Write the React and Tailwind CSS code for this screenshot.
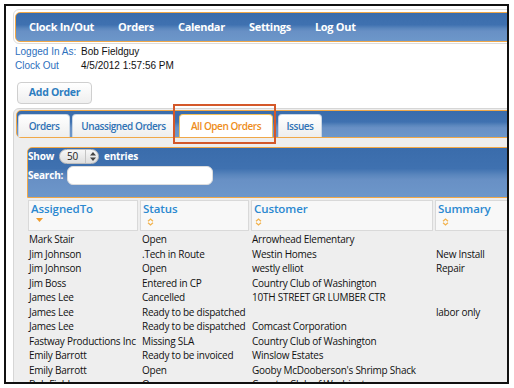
import React from "react";

const bar =
  "bg-[linear-gradient(to_bottom,#3a6cab_0%,#3f71b0_42%,#5a86bd_55%,#6890c5_65%,#6d97ca_100%)]";

const rows = [
  ["Mark Stair", "Open", "Arrowhead Elementary", ""],
  ["Jim Johnson", ".Tech in Route", "Westin Homes", "New Install"],
  ["Jim Johnson", "Open", "westly elliot", "Repair"],
  ["Jim Boss", "Entered in CP", "Country Club of Washington", ""],
  ["James Lee", "Cancelled", "10TH STREET GR LUMBER CTR", ""],
  ["James Lee", "Ready to be dispatched", "", "labor only"],
  ["James Lee", "Ready to be dispatched", "Comcast Corporation", ""],
  ["Fastway Productions Inc", "Missing SLA", "Country Club of Washington", ""],
  ["Emily Barrott", "Ready to be invoiced", "Winslow Estates", ""],
  ["Emily Barrott", "Open", "Gooby McDooberson's Shrimp Shack", ""],
  ["Bob Fieldguy", "Open", "Country Club of Washington", ""],
];

const navItems = ["Clock In/Out", "Orders", "Calendar", "Settings", "Log Out"];

// Sort indicators in the table header
const SortDown = () => (
  <svg width="7" height="4" viewBox="0 0 7 4" className="block">
    <path d="M0 0 H7 L3.5 4 Z" fill="#ef9b2c" />
  </svg>
);

const SortBoth = () => (
  <svg width="7" height="8" viewBox="0 0 7 8" className="block">
    <path d="M1 3.3 L3.5 1 L6 3.3 M1 4.7 L3.5 7 L6 4.7" fill="none" stroke="#f2b24c" strokeWidth="1.2" />
  </svg>
);

const HeaderCell = ({ label, active, pad }) => (
  <div className="h-[31px] border border-[#d9d9d9] bg-[#f8f8f8] pl-[2px] pt-[1px]">
    <div className="text-[11.5px] leading-[14px] font-semibold text-[#2b88d0] tracking-[-0.1px]">{label}</div>
    <div className={`mt-[2px] ${pad}`}>{active ? <SortDown /> : <SortBoth />}</div>
  </div>
);

const Tab = ({ label, w, active, mr }) => (
  <div
    className={`${w} ${mr} h-[23px] rounded-t-[4px] border border-b-0 flex items-center justify-center text-[10px] font-semibold tracking-[-0.45px] ${
      active
        ? "bg-white border-[#f3c35e] text-[#ee8d1a]"
        : "bg-[linear-gradient(to_bottom,#ffffff,#eeeeee)] border-[#c9d6e4] text-[#2f72b5]"
    }`}
  >
    {label}
  </div>
);

export default function App() {
  return (
    <div className="relative w-[514px] h-[388px] bg-white pt-[4px] pl-[4px] pr-[5px] pb-[4px] font-['Open_Sans',sans-serif]">
      <div className="h-full border-2 border-[#111] overflow-hidden bg-white">
        <div className="w-[620px] pl-[7px] pt-[3px]">
          {/* nav */}
          <div className="border border-[#dddddd] rounded-[6px] pl-[1px] pt-[2px] pb-[1px]">
            <div className={`h-[30px] border border-[#f0a848] rounded-l-[5px] ${bar} flex items-center gap-[24px] pl-[13px] text-white font-bold text-[11px] tracking-[-0.3px]`}>
              {navItems.map((n) => (
                <span key={n}>{n}</span>
              ))}
            </div>
          </div>

          {/* user info */}
          <div className="mt-[1px] pl-[2px] font-['Liberation_Sans',Arial,sans-serif] text-[10px] leading-[14px]">
            <div className="flex">
              <span className="w-[66px] text-[#2c6fbd]">Logged In As:</span>
              <span className="text-[#111]">Bob Fieldguy</span>
            </div>
            <div className="flex">
              <span className="w-[66px] text-[#2c6fbd]">Clock Out</span>
              <span className="text-[#111]">4/5/2012 1:57:56 PM</span>
            </div>
          </div>

          <button className="mt-[9px] ml-[4px] w-[75px] h-[22px] rounded-[4px] border border-[#cfcfcf] bg-[linear-gradient(to_bottom,#ffffff,#efefef)] text-[#2d7dc0] font-bold text-[10.5px] tracking-[-0.3px] flex items-center justify-center">
            Add Order
          </button>

          {/* tabs container */}
          <div className="mt-[4px] border border-[#d6d6d6] rounded-[6px] bg-[#eeeeee] pl-[2px] pt-[1px] h-[300px]">
            <div className={`h-[28px] border border-[#f0a848] rounded-[5px] ${bar} flex items-end pl-[1px]`}>
              <Tab label="Orders" w="w-[52px]" mr="mr-[2px]" />
              <Tab label="Unassigned Orders" w="w-[103px]" mr="mr-[4px]" />
              <Tab label="All Open Orders" w="w-[94px]" mr="mr-[5px]" active />
              <Tab label="Issues" w="w-[44px]" mr="" />
            </div>

            <div className="pl-[11px] pt-[9px]">
              {/* show / search panel */}
              <div className={`h-[51px] border border-[#f0a848] rounded-tl-[5px] ${bar} pt-[1px] text-white font-bold text-[10px] tracking-[-0.2px]`}>
                <div className="flex items-center h-[15px]">
                  <span>Show</span>
                  <div className="ml-[5px] w-[40px] h-[15px] rounded-full border border-[#bdbdbd] bg-[linear-gradient(to_bottom,#f7f7f7,#dedede)] flex items-center text-[#222] font-normal">
                    <span className="w-[25px] text-center">50</span>
                    <span className="h-full border-l border-[#c4c4c4]" />
                    <svg width="6" height="9" viewBox="0 0 6 9" className="ml-[4px]">
                      <path d="M0 3.5 L3 0 L6 3.5 Z M0 5.5 L3 9 L6 5.5 Z" fill="#444" />
                    </svg>
                  </div>
                  <span className="ml-[5px]">entries</span>
                </div>
                <div className="flex items-center mt-[2px] h-[19px]">
                  <span>Search:</span>
                  <div className="ml-[4px] w-[146px] h-[19px] rounded-[6px] bg-white border border-[#dcdcdc]" />
                </div>
              </div>

              {/* table */}
              <div className="pl-[1px] mt-[2px] w-[560px]">
                <div className="grid grid-cols-[110px_109px_182px_1fr] gap-x-[2px]">
                  <HeaderCell label="AssignedTo" active pad="pl-[5px]" />
                  <HeaderCell label="Status" pad="pl-[4px]" />
                  <HeaderCell label="Customer" pad="pl-[1px]" />
                  <HeaderCell label="Summary" pad="pl-[4px]" />
                </div>
                <div className="mt-[1px] text-[10px] text-[#111] tracking-[-0.25px]">
                  {rows.map((r, i) => (
                    <div key={i} className="grid grid-cols-[110px_109px_182px_1fr] gap-x-[2px] h-[14.55px] items-center whitespace-nowrap">
                      <span className="pl-[1px]">{r[0]}</span>
                      <span className="pl-[2px]">{r[1]}</span>
                      <span className="pl-[1px]">{r[2]}</span>
                      <span className="pl-[1px]">{r[3]}</span>
                    </div>
                  ))}
                </div>
              </div>
            </div>
          </div>
        </div>
      </div>

      {/* highlight box */}
      <div className="absolute left-[173px] top-[104px] w-[103px] h-[40px] border-2 border-[#d4582a]" />
    </div>
  );
}
